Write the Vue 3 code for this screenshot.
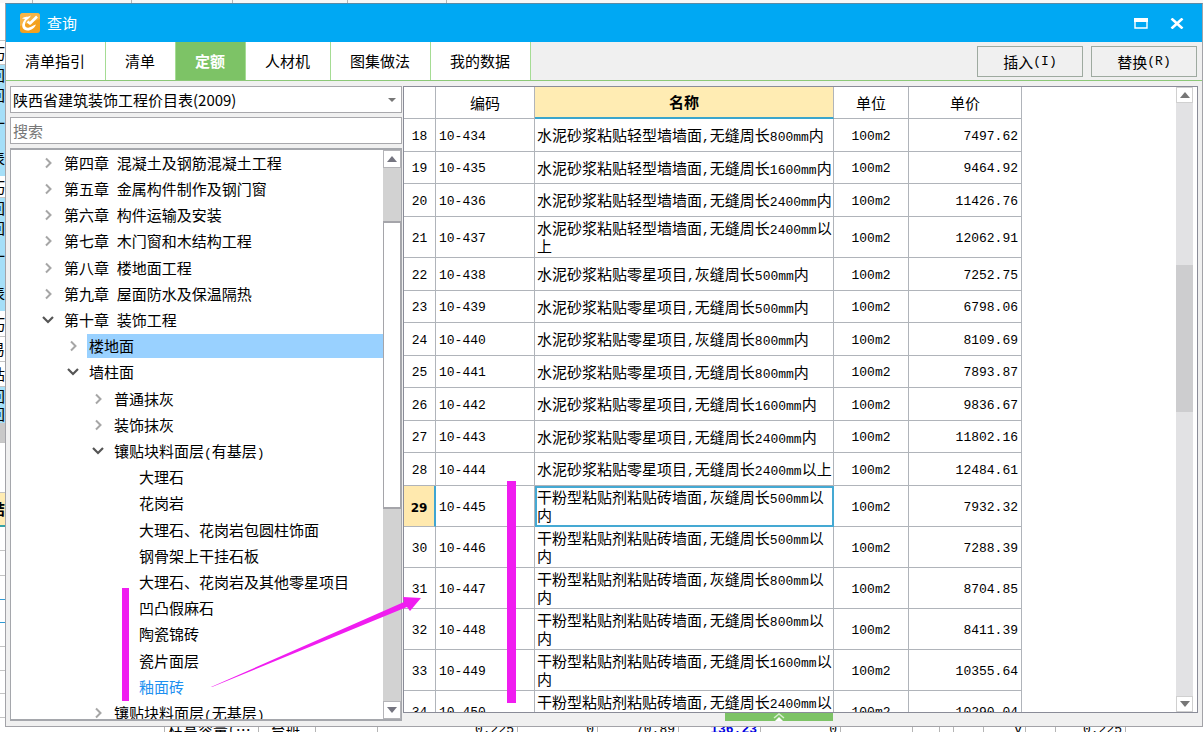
<script setup>
import { h, ref } from 'vue'

// Half-width runs are set in a smaller monospaced face beside the full-width text.
const Mixed = (props) =>
  props.text
    .split(/([\x20-\x7e]+)/)
    .filter(Boolean)
    .map((part) => (/^[\x20-\x7e]/.test(part) ? h('span', { class: 'latin' }, part) : part))
Mixed.props = ['text']

const tabs = ['清单指引', '清单', '定额', '人材机', '图集做法', '我的数据']
const activeTab = ref('定额')
const keyword = ref('')

const tree = [
  { t: '第四章 混凝土及钢筋混凝土工程', d: 0, s: 'closed' },
  { t: '第五章 金属构件制作及钢门窗', d: 0, s: 'closed' },
  { t: '第六章 构件运输及安装', d: 0, s: 'closed' },
  { t: '第七章 木门窗和木结构工程', d: 0, s: 'closed' },
  { t: '第八章 楼地面工程', d: 0, s: 'closed' },
  { t: '第九章 屋面防水及保温隔热', d: 0, s: 'closed' },
  { t: '第十章 装饰工程', d: 0, s: 'open' },
  { t: '楼地面', d: 1, s: 'closed', selected: true },
  { t: '墙柱面', d: 1, s: 'open' },
  { t: '普通抹灰', d: 2, s: 'closed' },
  { t: '装饰抹灰', d: 2, s: 'closed' },
  { t: '镶贴块料面层(有基层)', d: 2, s: 'open' },
  { t: '大理石', d: 3 },
  { t: '花岗岩', d: 3 },
  { t: '大理石、花岗岩包圆柱饰面', d: 3 },
  { t: '钢骨架上干挂石板', d: 3 },
  { t: '大理石、花岗岩及其他零星项目', d: 3 },
  { t: '凹凸假麻石', d: 3 },
  { t: '陶瓷锦砖', d: 3 },
  { t: '瓷片面层', d: 3 },
  { t: '釉面砖', d: 3, link: true },
  { t: '镶贴块料面层(无基层)', d: 2, s: 'closed' }
]

const rows = [
  [18, '10-434', '水泥砂浆粘贴轻型墙墙面,无缝周长800mm内', '7497.62'],
  [19, '10-435', '水泥砂浆粘贴轻型墙墙面,无缝周长1600mm内', '9464.92'],
  [20, '10-436', '水泥砂浆粘贴轻型墙墙面,无缝周长2400mm内', '11426.76'],
  [21, '10-437', '水泥砂浆粘贴轻型墙墙面,无缝周长2400mm以上', '12062.91'],
  [22, '10-438', '水泥砂浆粘贴零星项目,灰缝周长500mm内', '7252.75'],
  [23, '10-439', '水泥砂浆粘贴零星项目,无缝周长500mm内', '6798.06'],
  [24, '10-440', '水泥砂浆粘贴零星项目,灰缝周长800mm内', '8109.69'],
  [25, '10-441', '水泥砂浆粘贴零星项目,无缝周长800mm内', '7893.87'],
  [26, '10-442', '水泥砂浆粘贴零星项目,无缝周长1600mm内', '9836.67'],
  [27, '10-443', '水泥砂浆粘贴零星项目,无缝周长2400mm内', '11802.16'],
  [28, '10-444', '水泥砂浆粘贴零星项目,无缝周长2400mm以上', '12484.61'],
  [29, '10-445', '干粉型粘贴剂粘贴砖墙面,灰缝周长500mm以内', '7932.32'],
  [30, '10-446', '干粉型粘贴剂粘贴砖墙面,无缝周长500mm以内', '7288.39'],
  [31, '10-447', '干粉型粘贴剂粘贴砖墙面,灰缝周长800mm以内', '8704.85'],
  [32, '10-448', '干粉型粘贴剂粘贴砖墙面,无缝周长800mm以内', '8411.39'],
  [33, '10-449', '干粉型粘贴剂粘贴砖墙面,无缝周长1600mm以内', '10355.64'],
  [34, '10-450', '干粉型粘贴剂粘贴砖墙面,无缝周长2400mm以内', '10290.04']
]
const currentRow = ref(29)

// Visible edges of the worksheet that lies behind the dialog.
const sheetLeft = [
  { g: 38, tone: 'white' }, { g: 24, tone: 'white', t: '巧' },
  { g: 20, tone: 'cyan', t: '回' }, { g: 20, tone: 'cyan', t: '回' }, { g: 36, tone: 'cyan', t: '一' }, { g: 35, tone: 'cyan', t: '表' },
  { g: 22, tone: 'white', t: '巧' },
  { g: 20, tone: 'cyan', t: '回' }, { g: 20, tone: 'cyan', t: '回' }, { g: 37, tone: 'cyan', t: '一' }, { g: 36, tone: 'cyan', t: '表' },
  { g: 26, tone: 'white', t: '巧' }, { g: 25, tone: 'white', t: '易' }, { g: 25, tone: 'white', t: '站' },
  { g: 18, tone: 'cyan', t: '回' }, { g: 18, tone: 'cyan', t: '回' }, { g: 20, tone: 'gray' },
  { g: 50, tone: 'white' }, { g: 34, tone: 'cream', t: '结' },
  { g: 24, tone: 'line' }, { g: 25, tone: 'line' }, { g: 24, tone: 'blue' }, { g: 23, tone: 'blue' },
  { g: 24, tone: 'line' }, { g: 24, tone: 'line' }, { g: 23, tone: 'line' }, { g: 24, tone: 'line' }, { g: 17, tone: 'white' }
]
const sheetTop = [33, 99, 101, 115, 99]
const sheetBottom = [
  { w: 165 }, { w: 94, t: '柱高容量(…', a: 'start' }, { w: 57, t: '台班', a: 'mid' }, { w: 62 },
  { w: 140, t: '0.225' }, { w: 80, t: '0' }, { w: 81, t: '70.89' }, { w: 82, t: '136.23', a: 'strong' }, { w: 80, t: '0' },
  { w: 72 }, { w: 27 }, { w: 14 }, { w: 30 }, { w: 42, t: 'v' }, { w: 30 }, { w: 70, t: '0.225' }
]
</script>

<template>
  <div class="desktop">
    <div class="sheet-top"><i v-for="(w, i) in sheetTop" :key="i" :style="{ width: w + 'px' }"></i></div>
    <div class="middle">
      <div class="sheet-left">
        <span v-for="(c, i) in sheetLeft" :key="i" :class="c.tone" :style="{ height: c.g + 'px' }">{{ c.t }}</span>
      </div>
      <main class="dialog">
        <header class="titlebar">
          <svg class="logo" viewBox="0 0 20 20" width="20" height="20" aria-hidden="true">
            <rect width="20" height="20" rx="3" fill="#f3a11f" />
            <path d="M0 3Q0 0 3 0H17Q20 0 20 3V6L0 13Z" fill="#f7b548" />
            <path d="M2 5.500C5 3 8 4.500 11 2.500C9.500 5.500 6.500 6.500 5.500 9C4 13 6 15.500 9 14.500C12 13.500 14 12 16 11.500C14.500 15 11.500 17.500 7.500 17.500C3 17.500 1 13.500 3 9.500C3.600 8 4.500 7 5 6Z" fill="#fff" />
            <path d="M7.500 8.500L10 10.500L17 3.500" fill="none" stroke="#fff" stroke-width="2.600" stroke-linejoin="round" />
          </svg>
          <h1>查询</h1>
          <button class="win" type="button" aria-label="最大化">
            <svg viewBox="0 0 14 11" width="14" height="11"><path d="M1 1H13V10H1Z" fill="none" stroke="#fff" stroke-width="1.400" /><path d="M0 0H14V4H0Z" fill="#fff" /></svg>
          </button>
          <button class="win" type="button" aria-label="关闭">
            <svg viewBox="0 0 14 11" width="14" height="11"><path d="M1.500 .5L12.500 10.500M12.500 .5L1.500 10.500" stroke="#fff" stroke-width="2.600" /></svg>
          </button>
        </header>

        <div class="toolbar">
          <nav class="tabs">
            <button v-for="t in tabs" :key="t" type="button" :class="{ active: t === activeTab }" @click="activeTab = t">{{ t }}</button>
          </nav>
          <div class="actions">
            <button type="button"><Mixed text="插入(I)" /></button>
            <button type="button"><Mixed text="替换(R)" /></button>
          </div>
        </div>

        <div class="body">
          <section class="side">
            <div class="picker">
              <select aria-label="定额库"><option>陕西省建筑装饰工程价目表(2009)</option></select>
              <svg viewBox="0 0 8 4" width="8" height="4" aria-hidden="true"><path d="M0 0H8L4 4Z" fill="#777" /></svg>
            </div>
            <input v-model="keyword" class="search" type="text" placeholder="搜索" aria-label="搜索" />
            <div class="treebox">
              <ul class="tree">
                <li v-for="n in tree" :key="n.t" :class="['d' + n.d, { selected: n.selected, link: n.link }]">
                  <span class="twist">
                    <svg v-if="n.s === 'closed'" viewBox="0 0 12 12" width="12" height="12"><path d="M4 1.500L8.500 6L4 10.500" fill="none" stroke="#a6a6a6" stroke-width="2" /></svg>
                    <svg v-else-if="n.s === 'open'" viewBox="0 0 12 12" width="12" height="12"><path d="M1 3L6 8L11 3" fill="none" stroke="#555" stroke-width="2.200" /></svg>
                  </span>
                  <span class="label"><Mixed :text="n.t" /></span>
                </li>
              </ul>
              <div class="scroll tree-scroll">
                <button type="button" aria-label="向上滚动"><svg viewBox="0 0 10 6" width="10" height="6"><path d="M0 6L5 0L10 6Z" fill="#757580" /></svg></button>
                <i class="before"></i><i class="thumb"></i><i class="after"></i>
                <button type="button" aria-label="向下滚动"><svg viewBox="0 0 10 6" width="10" height="6"><path d="M0 0L5 6L10 0Z" fill="#757580" /></svg></button>
              </div>
            </div>
          </section>

          <section class="result">
            <div class="grid">
              <div class="grid-view">
                <table>
                  <colgroup><col class="c-no" /><col class="c-code" /><col class="c-name" /><col class="c-unit" /><col class="c-price" /></colgroup>
                  <thead>
                    <tr><th></th><th>编码</th><th class="sorted">名称</th><th>单位</th><th>单价</th></tr>
                  </thead>
                  <tbody>
                    <tr v-for="r in rows" :key="r[0]" :class="{ current: r[0] === currentRow }" @click="currentRow = r[0]">
                      <td class="no">{{ r[0] }}</td>
                      <td class="code">{{ r[1] }}</td>
                      <td class="name"><Mixed :text="r[2]" /></td>
                      <td class="unit">100m2</td>
                      <td class="price">{{ r[3] }}</td>
                    </tr>
                  </tbody>
                </table>
              </div>
              <div class="scroll grid-scroll">
                <button type="button" aria-label="向上滚动"><svg viewBox="0 0 10 6" width="10" height="6"><path d="M0 6L5 0L10 6Z" fill="#777" /></svg></button>
                <i class="before"></i><i class="thumb"></i><i class="after"></i>
                <button type="button" aria-label="向下滚动"><svg viewBox="0 0 10 6" width="10" height="6"><path d="M0 0L5 6L10 0Z" fill="#777" /></svg></button>
              </div>
            </div>
            <button class="expander" type="button" aria-label="展开">
              <svg viewBox="0 0 12 8" width="12" height="8"><path d="M1 5L6 1L11 5" fill="none" stroke="#d9f0d0" stroke-width="1.500" /><path d="M2 8L6 4L10 8Z" fill="#fff" /></svg>
            </button>
          </section>
        </div>
      </main>
    </div>
    <div class="sheet-bottom">
      <span v-for="(c, i) in sheetBottom" :key="i" :class="c.a" :style="{ width: c.w + 'px' }"><Mixed v-if="c.t" :text="c.t" /></span>
    </div>

    <svg class="marks" viewBox="0 0 600 732" width="600" height="732" aria-hidden="true">
      <g fill="#f01df0">
        <rect x="122" y="588" width="7" height="113" />
        <rect x="507" y="481" width="9" height="222" />
        <path d="M211 687L404 602L403 597L421 598L410 611L407 607L212 687Z" />
      </g>
    </svg>
  </div>
</template>

<style>
html, body { margin: 0; background: #fff; }
.latin { font-family: "Liberation Mono", monospace; font-size: 13px; line-height: 1; white-space: pre; }
</style>

<style scoped>
.desktop {
  position: relative;
  display: flex;
  flex-direction: column;
  height: 100vh;
  overflow: hidden;
  font-family: "Noto Sans CJK SC", sans-serif;
  font-size: 15px;
  line-height: 18px;
  color: #000;
}
.desktop *, .desktop { box-sizing: border-box; }
button, input, select { font: inherit; color: inherit; margin: 0; padding: 0; border-radius: 0; }
button { display: flex; align-items: center; justify-content: center; border: 0; }

.sheet-top { display: flex; flex: none; height: 3px; background: #f7f7f7; }
.sheet-top i { border-right: 1px solid #b5b5b5; }
.middle { display: flex; flex: 1; min-height: 0; }
.sheet-left { flex: none; width: 5px; overflow: hidden; }
.sheet-left span { display: flex; align-items: center; justify-content: flex-end; overflow: hidden; border-bottom: 1px solid #c4c4c4; background: #fff; }
.sheet-left .cyan { background: #a5dff8; border-bottom-color: #a5dff8; }
.sheet-left .gray { background: #c8c8c8; }
.sheet-left .cream { background: #ffecb3; border-bottom: 2px solid #37a3a8; font-weight: 700; }
.sheet-left .blue { border-bottom-color: #2e9bd6; }
.sheet-bottom { display: flex; flex: none; height: 5px; overflow: hidden; align-items: center; }
.sheet-bottom span { display: flex; flex: none; align-items: center; justify-content: flex-end; height: 18px; padding-right: 3px; border-right: 1px solid #b5b5b5; white-space: nowrap; overflow: hidden; }
.sheet-bottom .start { justify-content: flex-start; padding-left: 3px; }
.sheet-bottom .mid { justify-content: center; }
.sheet-bottom .strong { font-weight: 700; color: #0000e0; }

.dialog { display: flex; flex-direction: column; flex: 1; min-width: 0; background: #f0f0f0; border: 1px solid #a3a3a8; border-top-color: #5a8aa6; }
.titlebar { display: flex; align-items: center; flex: none; height: 38px; padding: 0 18px 0 14px; background: #00a8f3; color: #fff; }
.titlebar h1 { flex: 1; margin: 0 0 0 7px; font-size: 15px; font-weight: 400; }
.win { width: 14px; height: 20px; margin-left: 22px; background: none; }

.toolbar { display: flex; justify-content: space-between; flex: none; height: 39px; border-bottom: 1px solid #8cc878; }
.tabs { display: flex; }
.tabs button { padding: 0 20px 0 19px; background: #fff; border-right: 1px solid #a5dc94; }
.tabs .active { background: #7dc366; color: #fff; font-weight: 700; }
.actions { display: flex; gap: 8px; padding: 4px 5px 0 0; }
.actions button { width: 106px; height: 31px; background: #f0f0f0; border: 1px solid #9eaaa0; }

.body { display: flex; flex: 1; min-height: 0; padding: 5px 4px 5px 4px; }
.side { display: flex; flex-direction: column; flex: none; width: 392px; }
.picker { position: relative; height: 27px; }
.picker select { display: block; width: 100%; height: 100%; padding: 0 20px 0 2px; appearance: none; background: #fff; border: 1px solid #a8a8ac; }
.picker svg { position: absolute; right: 6px; top: 12px; pointer-events: none; }
.search { width: 100%; height: 27px; margin: 4px 0; padding: 0 2px; background: #fff; border: 1px solid #a8a8ac; }
.search::placeholder { color: #777; opacity: 1; }
.treebox { display: flex; flex: 1; min-height: 0; background: #fff; border: 2px solid #a5a7ac; border-width: 2px 1px; }
.tree { flex: 1; margin: 0; padding: 0; list-style: none; overflow: hidden; }
.tree li { display: flex; align-items: center; height: 26px; }
.tree li:nth-child(5n) { height: 27px; }
.tree .d0 { padding-left: 31px; }
.tree .d1 { padding-left: 56px; }
.tree .d2 { padding-left: 81px; }
.tree .d3 { padding-left: 106px; }
.twist { flex: none; width: 12px; height: 12px; }
.twist svg { display: block; }
.label { flex: 1; margin-left: 8px; padding-left: 2px; line-height: 24px; white-space: nowrap; }
.selected .label { background: #99d1ff; }
.link .label { color: #1e90f0; }

.scroll { display: flex; flex-direction: column; flex: none; width: 18px; background: #d2d2d2; }
.scroll button { flex: none; height: 18px; background: #fff; border: 1px solid #b4b4b8; }
.tree-scroll .before { flex: 54; }
.tree-scroll .thumb { flex: 287; background: #fff; border: 1px solid #a5a5aa; border-width: 2px 1px; }
.tree-scroll .after { flex: 194; }
.grid-scroll { width: 17px; margin-right: 4px; background: #e2e2e4; }
.grid-scroll button { height: 16px; border-color: #d0d0d0; }
.grid-scroll .before { flex: 162; }
.grid-scroll .thumb { flex: 147; background: #cdcdcf; }
.grid-scroll .after { flex: 284; }

.result { display: flex; flex-direction: column; flex: 1; min-width: 0; margin-left: 1px; }
.grid { display: flex; flex: 1; min-height: 0; background: #fff; border: 1px solid #8a8c98; }
.grid-view { flex: 1; min-width: 0; overflow: hidden; }
table { table-layout: fixed; width: 618px; border-spacing: 0; }
.c-no { width: 32px; }
.c-code { width: 99px; }
.c-name { width: 299px; }
.c-unit { width: 75px; }
.c-price { width: 113px; }
th, td { padding: 2px 0; height: 32px; border: 0 solid #b0b4ba; border-width: 0 1px 1px 0; }
tbody tr:nth-child(odd) td { height: 33px; }
th { padding: 0; font-weight: 400; text-align: center; }
.sorted { background: #ffecb3; border-bottom: 2px solid #3aa5cc; font-weight: 700; }
.no, .code, .unit, .price { padding-top: 5px; font-family: "Liberation Mono", monospace; font-size: 13px; }
.no, .unit { text-align: center; }
.code { padding-left: 3px; }
.name { padding-left: 2px; }
.price { padding-right: 3px; text-align: right; }
.current .no { background: #ffe9ae; border-right: 2px solid #3fa5d2; font-family: "DejaVu Sans", sans-serif; font-size: 12px; font-weight: 700; }
.current .name { outline: 2px solid #45a9d3; outline-offset: -2px; }
.expander { align-self: flex-start; flex: none; width: 108px; height: 8px; margin-left: 322px; background: #7dc366; }

.marks { position: absolute; left: 0; top: 0; pointer-events: none; }
</style>
